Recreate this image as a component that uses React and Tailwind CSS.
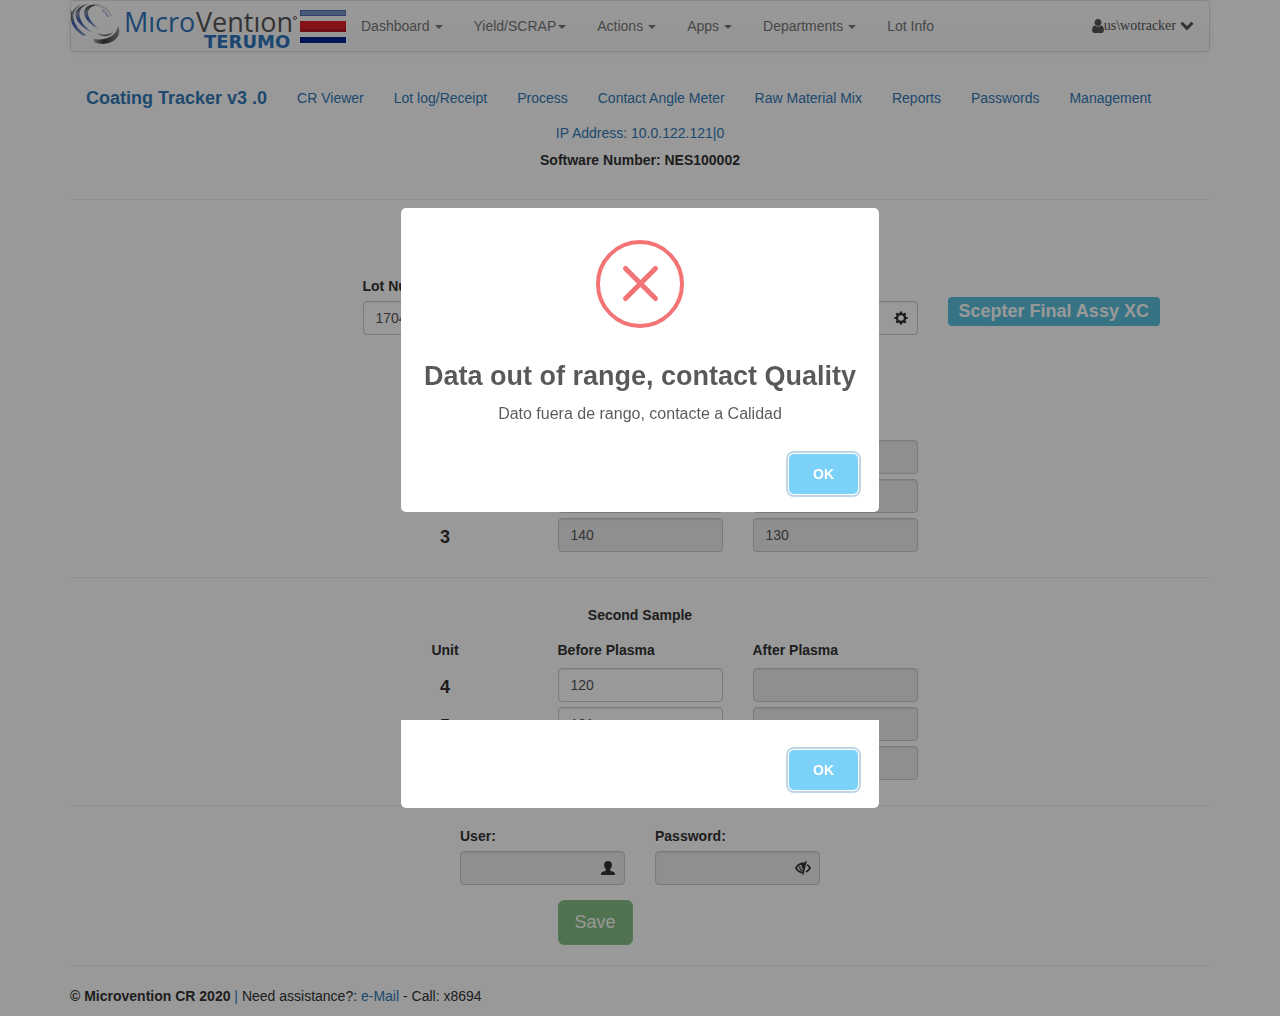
import React from "react";

const sans = "font-['Liberation_Sans',Arial,sans-serif]";

function Caret({ tight }) {
  return (
    <span
      className={
        (tight ? "ml-0.5" : "ml-[5px]") +
        " mr-px inline-block border-x-4 border-t-4 border-x-transparent border-t-[#777] align-middle"
      }
    />
  );
}

function Logo() {
  return (
    <svg width="228" height="50" viewBox="0 0 228 50" role="img" aria-label="MicroVention Terumo">
      <defs>
        <linearGradient id="arcBlue" x1="0" y1="0" x2="0" y2="1">
          <stop offset="0" stopColor="#454545" />
          <stop offset="0.35" stopColor="#8b93a3" />
          <stop offset="0.6" stopColor="#3c5fae" />
          <stop offset="1" stopColor="#8d9fc9" />
        </linearGradient>
        <linearGradient id="arcGray" x1="0" y1="0" x2="1" y2="0">
          <stop offset="0" stopColor="#a5a5a5" />
          <stop offset="0.4" stopColor="#3c3c3c" />
          <stop offset="1" stopColor="#8d8d8d" />
        </linearGradient>
      </defs>
      <path d="M11 3C-1 9-1 23 15 34L13 35C-5 25-3 8 11 3Z" fill="url(#arcBlue)" />
      <path d="M18 3C5 6 5 20 21 31L18 30C0 20 0 5 18 3Z" fill="url(#arcBlue)" />
      <path d="M29 4C14 4 13 16 27 27L24 26C7 15 11 1 29 4Z" fill="url(#arcBlue)" />
      <path d="M1 10C0 14 0 16 1 19" fill="none" stroke="#555" strokeWidth="1" />
      <path d="M24 4C33 5 38 9 40 15" fill="none" stroke="#d8d8d8" strokeWidth="2" />
      <path d="M31 9C34 11 36 13 37 16" fill="none" stroke="#5d7fd0" strokeWidth="1" />
      <path d="M23 38C36 40 46 34 47 25C53 38 36 47 23 41Z" fill="url(#arcGray)" />
      <path d="M26 32C33 35 39 33 42 31C39 36 31 37 26 32Z" fill="#777" />
      <text x="53" y="31" fontFamily="Open Sans, sans-serif" fontSize="27" fill="#2f76bd">
        Mıcro
      </text>
      <text x="125" y="31" fontFamily="Open Sans, sans-serif" fontSize="27" fill="#555">
        Ventıon
      </text>
      <circle cx="224" cy="17" r="1.5" fill="none" stroke="#666" />
      <text x="133" y="47" fontFamily="DejaVu Sans, sans-serif" fontWeight="700" fontSize="18" fill="#2f76bd">
        TERUMO
      </text>
    </svg>
  );
}

function Flag() {
  return (
    <svg width="46" height="33" viewBox="0 0 46 33" role="img" aria-label="Costa Rica">
      <rect width="46" height="33" fill="#fafafa" />
      <rect width="46" height="6" fill="#7d95d0" />
      <rect x="0.5" y="0.5" width="45" height="5" fill="none" stroke="#5470b0" />
      <rect y="11" width="46" height="11" fill="#dc1f26" />
      <rect y="19" width="46" height="3" fill="#b81820" />
      <rect y="27" width="46" height="6" fill="#00238c" />
    </svg>
  );
}

function UserIcon() {
  return (
    <svg width="12" height="14" viewBox="0 128 1280 1536" fill="currentColor" aria-hidden="true">
      <path d="M1280 1399q0 109-62.5 187t-150.5 78h-854q-88 0-150.5-78t-62.5-187q0-85 8.5-160.5t31.5-152 58.5-131 94-89 134.5-34.5q131 128 313 128t313-128q76 0 134.5 34.5t94 89 58.5 131 31.5 152 8.5 160.5zm-256-887q0 159-112.5 271.5t-271.5 112.5-271.5-112.5-112.5-271.5 112.5-271.5 271.5-112.5 271.5 112.5 112.5 271.5z" />
    </svg>
  );
}

function ChevronIcon() {
  return (
    <svg width="14" height="10" viewBox="0 0 14 10" fill="currentColor" aria-hidden="true">
      <path d="M2.5 .7L7 5.1L11.5 .7L13.6 2.8L7 9.4L.4 2.8Z" />
    </svg>
  );
}

function GearIcon() {
  return (
    <svg width="14" height="14" viewBox="0 0 14 14" aria-hidden="true">
      <circle cx="7" cy="7" r="4" fill="none" stroke="#333" strokeWidth="2.4" />
      <g stroke="#333" strokeWidth="2.2">
        <path d="M7 .4V2.6M7 11.4V13.6M.4 7H2.6M11.4 7H13.6M2.3 2.3L3.9 3.9M10.1 10.1L11.7 11.7M2.3 11.7L3.9 10.1M10.1 3.9L11.7 2.3" />
      </g>
    </svg>
  );
}

function PersonIcon() {
  return (
    <svg width="14" height="14" viewBox="0 0 14 14" fill="#333" aria-hidden="true">
      <path d="M7 0C9.5 0 10.9 1.5 10.9 3.7C10.9 5.6 10.2 7.1 9.2 8V9.2C9.2 9.7 9.8 9.9 10.7 10.3C12.8 11.1 14 11.6 14 12.8V14H0V12.8C0 11.6 1.2 11.1 3.3 10.3C4.2 9.9 4.8 9.7 4.8 9.2V8C3.8 7.1 3.1 5.6 3.1 3.7C3.1 1.5 4.5 0 7 0Z" />
    </svg>
  );
}

function EyeClosedIcon() {
  return (
    <svg width="16" height="14" viewBox="0 0 16 14" fill="none" stroke="#333" aria-hidden="true">
      <path d="M9.5 2.4C5 2 2.2 4.8 1 7C2.2 9.2 4.4 11.2 7.6 11.6" strokeWidth="1.7" />
      <path d="M12 3.6C13.4 4.5 14.4 5.8 15 7C14.1 8.6 12.8 10 11 11" strokeWidth="1.7" />
      <path d="M11 .3L7.8 13.6" strokeWidth="1.5" />
      <path d="M5.6 3.2L10 2.2L8.7 7.5C7.4 7.7 6.8 6.6 7.2 5.4" fill="#333" strokeWidth=".8" />
      <path d="M4.8 5C4.4 7.4 5.8 9.2 8.1 9.6" strokeWidth="1.2" />
    </svg>
  );
}

const inputBase =
  "block h-[34px] w-full rounded border border-[#ccc] px-3 text-sm text-[#555] shadow-[inset_0_1px_1px_rgba(0,0,0,.075)] bg-white disabled:bg-[#eee]";

function Field({ id, label, icon, className, ...rest }) {
  return (
    <div className={className}>
      {label && (
        <label htmlFor={id} className="mb-[5px] block font-bold">
          {label}
        </label>
      )}
      <div className="relative">
        <input id={id} className={inputBase} {...rest} />
        {icon && (
          <span className="absolute inset-y-0 right-0 flex w-[34px] items-center justify-center">{icon}</span>
        )}
      </div>
    </div>
  );
}

function SampleHeading({ title }) {
  return (
    <>
      <h2 className="mb-[15px] text-center font-bold">{title}</h2>
      <div className="mb-2 grid grid-cols-12 gap-x-[30px] font-bold">
        <div className="col-span-2 col-start-4 text-center">Unit</div>
        <div className="col-span-2">Before Plasma</div>
        <div className="col-span-2">After Plasma</div>
      </div>
    </>
  );
}

function SampleRows({ rows }) {
  return (
    <div className="space-y-[5px]">
      {rows.map((r) => (
        <div key={r.unit} className="grid grid-cols-12 gap-x-[30px]">
          <div className="col-span-2 col-start-4 pt-2 text-center text-lg/[22px] font-bold">{r.unit}</div>
          <div className="col-span-2">
            <input
              aria-label={"Before Plasma " + r.unit}
              className={inputBase}
              defaultValue={r.before}
              disabled={r.locked}
            />
          </div>
          <div className="col-span-2">
            <input aria-label={"After Plasma " + r.unit} className={inputBase} defaultValue={r.after} disabled />
          </div>
        </div>
      ))}
    </div>
  );
}

function OkButton() {
  return (
    <button
      type="button"
      className="h-10 rounded-[5px] bg-[#7cd1f9] px-6 text-sm font-bold text-white shadow-[0_0_0_1px_#fff,0_0_0_3px_rgba(43,114,165,0.29)]"
    >
      OK
    </button>
  );
}

const firstSample = [
  { unit: 1, before: "", after: "", locked: true },
  { unit: 2, before: "", after: "", locked: true },
  { unit: 3, before: "140", after: "130", locked: true },
];

const secondSample = [
  { unit: 4, before: "120", after: "" },
  { unit: 5, before: "121", after: "" },
  { unit: 6, before: "", after: "" },
];

const mainMenu = [
  { text: "Dashboard", caret: true },
  { text: "Yield/SCRAP", caret: true, tight: true },
  { text: "Actions", caret: true },
  { text: "Apps", caret: true },
  { text: "Departments", caret: true },
  { text: "Lot Info" },
];

const trackerMenu = [
  "CR Viewer",
  "Lot log/Receipt",
  "Process",
  "Contact Angle Meter",
  "Raw Material Mix",
  "Reports",
  "Passwords",
  "Management",
];

export default function App() {
  return (
    <div className={sans + " bg-white text-sm/5 text-[#333]"}>
      <div className="mx-auto max-w-[1140px] pb-2">
        <nav className="flex h-[52px] items-center rounded border border-[#e2e2e2] bg-linear-to-b from-white to-[#f8f8f8] text-[#777] shadow-[0_1px_5px_rgba(0,0,0,0.075)]">
          <a href="#home" className="flex items-center gap-px">
            <Logo />
            <Flag />
          </a>
          <div className="flex">
            {mainMenu.map((m) => (
              <a key={m.text} href="#menu" className="px-[15px] whitespace-nowrap">
                {m.text}
                {m.caret && <Caret tight={m.tight} />}
              </a>
            ))}
          </div>
          <a
            href="#account"
            className="mr-[15px] ml-auto flex items-center font-['Liberation_Serif','Times_New_Roman',serif] text-[#555]"
          >
            <UserIcon />
            us\wotracker
            <span className="ml-1">
              <ChevronIcon />
            </span>
          </a>
        </nav>

        <nav className="mt-5 flex h-[51px] items-center pt-px pl-px whitespace-nowrap text-[#337ab7]">
          <a href="#tracker" className="px-[15px] text-lg/5 font-bold">
            Coating Tracker v3 .0
          </a>
          {trackerMenu.map((t) => (
            <a key={t} href="#section" className="px-[15px]">
              {t}
            </a>
          ))}
        </nav>
        <p className="text-center text-[#337ab7]">IP Address: 10.0.122.121|0</p>
        <p className="mt-[7px] text-center font-bold">Software Number: NES100002</p>
        <hr className="mt-[29px] border-[#eee]" />

        <div className="mt-[76px] mb-[105px] grid grid-cols-12 gap-x-[30px]">
          <Field id="lot" label="Lot Number:" className="col-span-2 col-start-4" defaultValue="1704" />
          <Field id="code" aria-label="Code" className="col-span-2 col-start-8 self-end" icon={<GearIcon />} />
          <div className="col-span-3 mt-[21px] flex items-start">
            <span className="rounded bg-[#5bc0de] px-[11px] pt-1 pb-[5px] text-lg/5 font-bold whitespace-nowrap text-white">
              Scepter Final Assy XC
            </span>
          </div>
        </div>

        <SampleRows rows={firstSample} />
        <hr className="mt-[25px] mb-[27px] border-[#eee]" />
        <SampleHeading title="Second Sample" />
        <SampleRows rows={secondSample} />
        <hr className="mt-[25px] mb-5 border-[#eee]" />

        <div className="grid grid-cols-12 gap-x-[30px]">
          <Field id="user" label="User:" className="col-span-2 col-start-5" icon={<PersonIcon />} disabled />
          <Field
            id="password"
            label="Password:"
            type="password"
            className="col-span-2"
            icon={<EyeClosedIcon />}
            disabled
          />
          <div className="col-span-2 col-start-6 mt-[15px]">
            <button
              type="button"
              disabled
              className="h-[45px] rounded-md border border-[#4cae4c] bg-[#449d44] px-4 pb-0.5 text-lg text-white opacity-65"
            >
              Save
            </button>
          </div>
        </div>
        <hr className="mt-5 mb-5 border-[#eee]" />
        <footer>
          <b>© Microvention CR 2020</b> <span className="text-[#337ab7]">|</span> Need assistance?:{" "}
          <a href="#mail" className="text-[#337ab7]">
            e-Mail
          </a>{" "}
          - Call: x8694
        </footer>
      </div>

      <div className="fixed inset-0 flex flex-col items-center gap-52 bg-black/40 pt-52">
        <div role="alertdialog" aria-labelledby="alert-title" className="w-full max-w-[478px] rounded-[5px] bg-white">
          <svg className="mx-auto mt-8" width="88" height="88" viewBox="0 0 88 88" fill="none" stroke="#f27474" aria-hidden="true">
            <circle cx="44" cy="44" r="42" strokeWidth="4" />
            <path d="M29.5 28.5L59.5 58.5M59.5 28.5L29.5 58.5" strokeWidth="5" strokeLinecap="round" />
          </svg>
          <h1 id="alert-title" className="mt-8 text-center text-[27px]/8 font-bold whitespace-nowrap text-black/65">
            Data out of range, contact Quality
          </h1>
          <p className="mt-3 text-center text-base/5 text-black/65">Dato fuera de rango, contacte a Calidad</p>
          <div className="mt-[30px] flex justify-end pr-[21px] pb-[18px]">
            <OkButton />
          </div>
        </div>
        <div className="flex w-full max-w-[478px] justify-end rounded-b-[5px] bg-white pt-[30px] pr-[21px] pb-[18px]">
          <OkButton />
        </div>
      </div>
    </div>
  );
}
